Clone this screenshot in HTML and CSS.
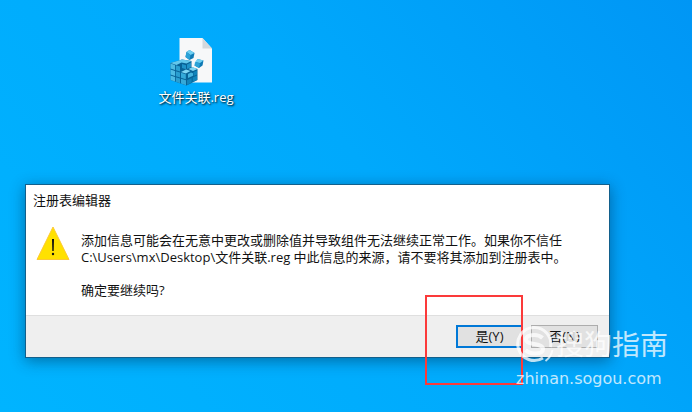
FILE: index.html
```html
<!DOCTYPE html>
<html lang="zh-CN">
<head>
  <meta charset="UTF-8" />
  <title>注册表编辑器</title>
  <link rel="stylesheet" href="styles.css">
</head>
<body>
  <main class="desktop">
    <!-- Desktop file -->
    <a class="desktop-file" href="#">
      <svg class="reg-icon" viewBox="0 0 42 48" aria-hidden="true">
        <path d="M9.500 0H32.500L42 10.500V44.500H9.500Z" fill="#f7f8f9"/>
        <path d="M32.500 0V10.500H42Z" fill="#d3d8dc"/>
        <!-- loose cubes -->
        <path d="M19.500 12l5 3-1 5-4 2-4-3 1-5z" fill="#0f79b4"/>
        <path d="M19.500 12l5 3-4 2-4-3z" fill="#6fd0f3"/>
        <path d="M16.500 14l4 3-1 5-4-3z" fill="#2ba3d8"/>
        <path d="M27.500 21l6 1.500-1 5-3.500 2.500-4.500-2.500z" fill="#0f79b4"/>
        <path d="M27.500 21l6 1.500-3.500 2.500-5-1z" fill="#6fd0f3"/>
        <path d="M25 24l5 1.500-1 4.500-4.500-2.500z" fill="#2ba3d8"/>
        <!-- cube block -->
        <path d="M0.500 25L12 21.500l9.500 1.500V29l6 2V42L16.500 47.500 0.500 42Z" fill="#086296"/>
        <path d="M0.500 25L12 21.500l9.500 1.500-5 2.500-5-1-5 2.500z" fill="#63c8ec"/>
        <path d="M0.500 25.500l4.500 1.500v5l-4.500-1.500zM0.500 31.500l4.500 1.500v5l-4.500-1.500zM0.500 37.500l4.500 1.500v4.500l-4.500-1.500z" fill="#4dbbe3"/>
        <path d="M5.800 27.200l4.200 1.300v5l-4.200-1.300zM5.800 33.200l4.200 1.300v5l-4.200-1.300zM5.800 39.200l4.200 1.300v4.800l-4.200-1.500z" fill="#2a9fd0"/>
        <path d="M11 34.800l4.800 1.500v5L11 39.800zM11 40.800l5 1.500v4.900l-5-1.700z" fill="#35a9d8"/>
        <path d="M12 26l4 1.200v4L12 30zM17 26.500l4-2v4.500l-4 2z" fill="#1f93c8"/>
        <path d="M11 34l5-2.500 4.500 1.500-4.700 2.500zM18.500 31l4-2 5 2-4.500 2z" fill="#7fd5f3"/>
        <path d="M18 36l3-1.500 2 .8v2.500l-5 2.200z" fill="#45b4df"/>
        <path d="M17 42.300l4.700-2.300v4.600l-4.700 2.300zM22.600 39.500l4.400-2v4.400l-4.400 2zM23.500 34l3.500-1.500v4l-3.500 1.500z" fill="#1184bb"/>
      </svg>
      <span class="file-name">文件关联.reg</span>
    </a>

    <!-- Registry editor dialog -->
    <section class="dialog" role="alertdialog" aria-labelledby="dialog-title" aria-describedby="dialog-text">
      <h1 class="dialog-title" id="dialog-title">注册表编辑器</h1>
      <div class="dialog-body">
        <svg class="warning-icon" viewBox="0 0 34 34" aria-hidden="true">
          <path d="M17 1L33 33.500H1Z" fill="#ffe100" stroke="#fdc935" stroke-linejoin="round"/>
          <path d="M16 13h2l-.3 12h-1.400z" fill="#111"/>
          <circle cx="17" cy="28" r="1.200" fill="#111"/>
        </svg>
        <div class="dialog-text" id="dialog-text">
          <p>添加信息可能会在无意中更改或删除值并导致组件无法继续正常工作。如果你不信任<br>C:\Users\mx\Desktop\文件关联.reg 中此信息的来源，请不要将其添加到注册表中。</p>
          <p>确定要继续吗?</p>
        </div>
      </div>
      <div class="dialog-actions">
        <button class="btn btn-default" type="button">是(Y)</button>
        <button class="btn" type="button">否(N)</button>
      </div>
    </section>

    <!-- Highlight around the yes button -->
    <div class="highlight"></div>

    <!-- Watermark -->
    <div class="watermark">
      <div class="watermark-brand">
        <svg class="watermark-logo" viewBox="0 0 38 38" aria-hidden="true">
          <path d="M27 33A16.500 16.500 0 1 1 34.500 22" fill="none" stroke="#fff" stroke-width="3"/>
          <path d="M26.500 13C24 10.500 21 10 18 10c-5 0-8 1.500-8 4.500 0 6 17 3 17 9.500 0 3-3 4.500-8 4.500-4 0-7-1-9.500-3.500" fill="none" stroke="#fff" stroke-width="4"/>
          <path d="M36.500 25c-1 5-3 8-7 11" fill="none" stroke="#fff" stroke-width="2"/>
        </svg>
        <span>搜狗指南</span>
      </div>
      <div class="watermark-site">zhinan.sogou.com</div>
    </div>
  </main>
</body>
</html>
```
FILE: styles.css
```css
/* ---- Global styles ---- */
* {
  box-sizing: border-box;
}
html, body {
  margin: 0;
  padding: 0;
  height: 100%;
}
body {
  font-family: "Open Sans", "Noto Sans CJK SC", sans-serif;
  font-size: 13px;
  line-height: 17px;
  color: #111;
}

/* ---- Desktop ---- */
.desktop {
  position: relative;
  min-height: 100%;
  overflow: hidden;
  background: linear-gradient(50deg, #00b4ff 0%, #00a9fc 55%, #0096f5 100%);
}
.desktop-file {
  position: absolute;
  top: 38px;
  left: 146px;
  width: 100px;
  display: flex;
  flex-direction: column;
  align-items: center;
  gap: 3px;
  color: #fff;
  text-decoration: none;
}
.reg-icon {
  width: 42px;
  height: 48px;
  margin-right: 10px;
}
.file-name {
  text-shadow: 1px 1px 2px #000;
}

/* ---- Dialog ---- */
.dialog {
  position: absolute;
  top: 184px;
  left: 25px;
  right: 82px;
  background: #fff;
  border: 1px solid #12608c;
  box-shadow: 0 3px 14px rgba(0, 30, 60, 0.45);
}
.dialog-title {
  margin: 0;
  padding: 7px 7px 0;
  font-size: 13px;
  font-weight: 400;
}
.dialog-body {
  display: flex;
  align-items: flex-start;
  gap: 11px;
  padding: 17px 10px 16px;
}
.warning-icon {
  flex: none;
  width: 34px;
  height: 34px;
}
.dialog-text {
  padding-top: 6px;
}
.dialog-text p {
  margin: 0 0 16px;
  white-space: nowrap;
}
.dialog-text p:last-child {
  margin-bottom: 0;
}
.dialog-actions {
  display: flex;
  justify-content: flex-end;
  gap: 8px;
  padding: 9px 11px;
  background: #efefef;
  border-top: 1px solid #dfdfdf;
}
.btn {
  width: 67px;
  height: 23px;
  padding: 0;
  font: inherit;
  color: #111;
  background: #e1e1e1;
  border: 1px solid #adadad;
}
.btn-default {
  border: 2px solid #0078d7;
}

/* ---- Highlight ---- */
.highlight {
  position: absolute;
  top: 295px;
  left: 425px;
  width: 98px;
  height: 90px;
  border: 2px solid #fb3a3a;
}

/* ---- Watermark ---- */
.watermark {
  position: absolute;
  top: 324px;
  left: 516px;
  color: #fff;
  opacity: 0.75;
}
.watermark-brand {
  display: flex;
  align-items: center;
  gap: 2px;
  font-size: 28px;
  line-height: 40px;
}
.watermark-logo {
  width: 38px;
  height: 38px;
}
.watermark-site {
  margin-top: 6px;
  font-family: "DejaVu Sans", sans-serif;
  font-size: 16px;
}
```
